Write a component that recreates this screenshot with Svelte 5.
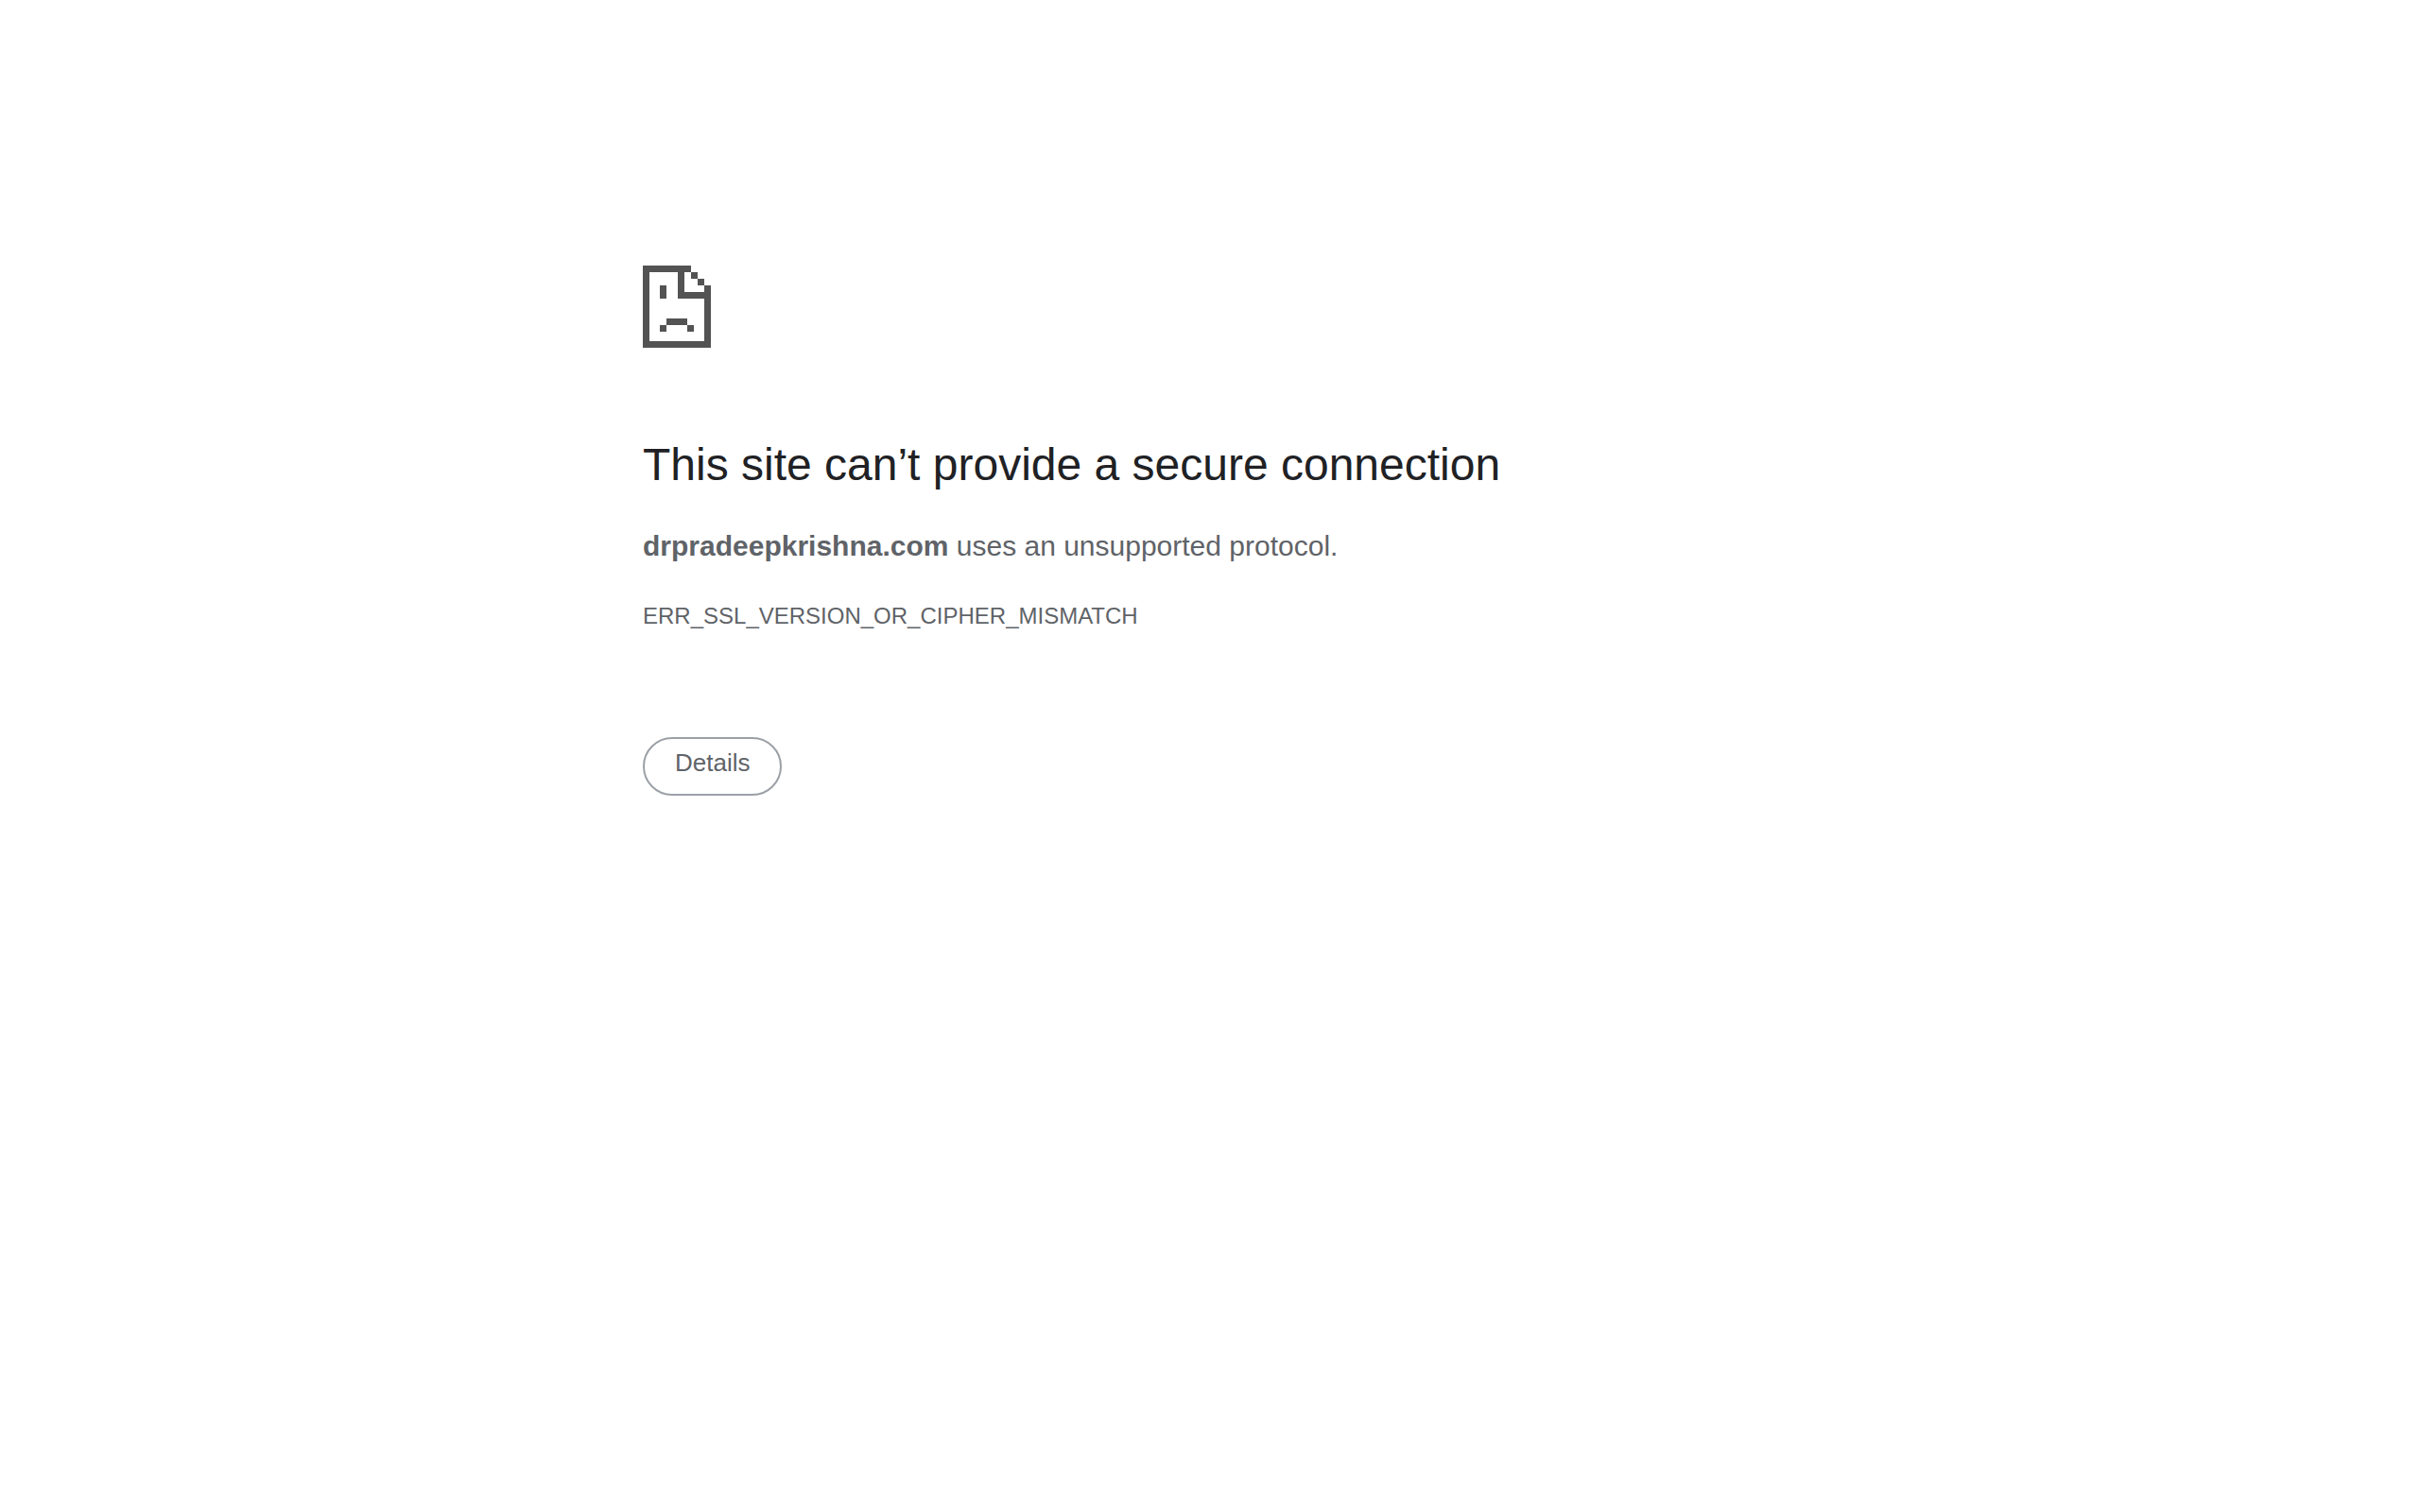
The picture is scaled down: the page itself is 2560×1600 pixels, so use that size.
<script>
	const host = 'drpradeepkrishna.com';
	const code = 'ERR_SSL_VERSION_OR_CIPHER_MISMATCH';
</script>

<svelte:head>
	<title>{host}</title>
</svelte:head>

<main class="wrap">
	<svg class="icon" viewBox="0 0 72 87" shape-rendering="crispEdges" aria-hidden="true">
		<!-- page outline -->
		<path d="M0 0H51V7H44V28H65V21H72V87H0ZM7 7V80H65V35H37V7Z" fill-rule="evenodd" />
		<!-- folded corner -->
		<path d="M51 7H58V14H51ZM58 14H65V21H58Z" />
		<!-- face -->
		<path d="M18 21H25V35H18ZM25 56H47V63H25ZM18 63H25V70H18ZM47 63H54V70H47Z" />
	</svg>

	<h1>This site can’t provide a secure connection</h1>
	<p class="summary"><strong>{host}</strong> uses an unsupported protocol.</p>
	<p class="code">{code}</p>

	<button class="details" type="button">Details</button>
</main>

<style>
	:global(body) {
		margin: 0;
		background: #fff;
	}

	.wrap {
		box-sizing: border-box;
		max-width: 1200px;
		margin: 0 auto;
		padding-top: 281px;
		font-family: 'Liberation Sans', Arial, sans-serif;
		color: #5f6368;
	}
	.icon {
		display: block;
		width: 72px;
		height: 87px;
		fill: #535353;
	}

	h1 {
		margin: 94px 0 32px;
		font-size: 48px;
		font-weight: 500;
		line-height: 60px;
		color: #202124;
	}
	p {
		margin: 0;
	}
	.summary {
		font-size: 30px;
		line-height: 48px;
	}
	.code {
		margin-top: 28px;
		font-size: 24px;
		line-height: 44px;
	}

	.details {
		display: block;
		margin-top: 106px;
		padding: 10px 32px 18px;
		border: 2px solid #9aa0a6;
		border-radius: 32px;
		background: #fff;
		font-family: inherit;
		font-size: 26px;
		line-height: 30px;
		color: #5f6368;
		cursor: pointer;
	}
</style>
